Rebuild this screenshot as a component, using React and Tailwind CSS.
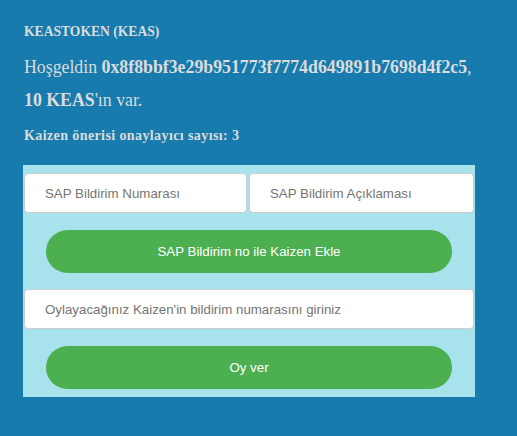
export default function App() {
  return (
    <div className="min-h-[436px] w-full bg-[#177bad] px-[24px] pt-[22px] pb-[39px] font-['Liberation_Serif',serif] text-[#dcdcdc]">
      <h4 className="text-[13.6px] font-bold leading-[20px]">KEASTOKEN (KEAS)</h4>
      <p className="mt-[9px] text-[17.8px] leading-[33px]">
        Hoşgeldin <b>0x8f8bbf3e29b951773f7774d649891b7698d4f2c5</b>,
        <br />
        <b>10 KEAS</b>'ın var.
      </p>
      <h5 className="mt-[9px] text-[14px] font-bold leading-[20px] tracking-[0.4px]">Kaizen önerisi onaylayıcı sayısı: 3</h5>

      <div className="-ml-px mt-[19px] w-[452px] bg-[#a7e2ed] px-px py-[8px] font-['Liberation_Sans',Arial,sans-serif]">
        <div className="flex gap-[2px]">
          <input
            placeholder="SAP Bildirim Numarası"
            className="h-[40px] w-[223px] rounded-[4px] border border-[#cccccc] bg-white pl-[20px] text-[13.3px] text-[#555] outline-none placeholder:text-[#757575]"
          />
          <input
            placeholder="SAP Bildirim Açıklaması"
            className="h-[40px] flex-1 rounded-[4px] border border-[#cccccc] bg-white pl-[20px] text-[13.3px] text-[#555] outline-none placeholder:text-[#757575]"
          />
        </div>
        <div className="mt-[17px] px-[22px]">
          <button className="h-[43px] w-full rounded-full bg-[#4caf50] text-[13.3px] text-white">
            SAP Bildirim no ile Kaizen Ekle
          </button>
        </div>
        <input
          placeholder="Oylayacağınız Kaizen'in bildirim numarasını giriniz"
          className="mt-[16px] block h-[40px] w-full rounded-[4px] border border-[#cccccc] bg-white pl-[20px] text-[13.3px] text-[#555] outline-none placeholder:text-[#757575]"
        />
        <div className="mt-[17px] px-[22px]">
          <button className="h-[43px] w-full rounded-full bg-[#4caf50] text-[13.3px] text-white">
            Oy ver
          </button>
        </div>
      </div>
    </div>
  );
}
